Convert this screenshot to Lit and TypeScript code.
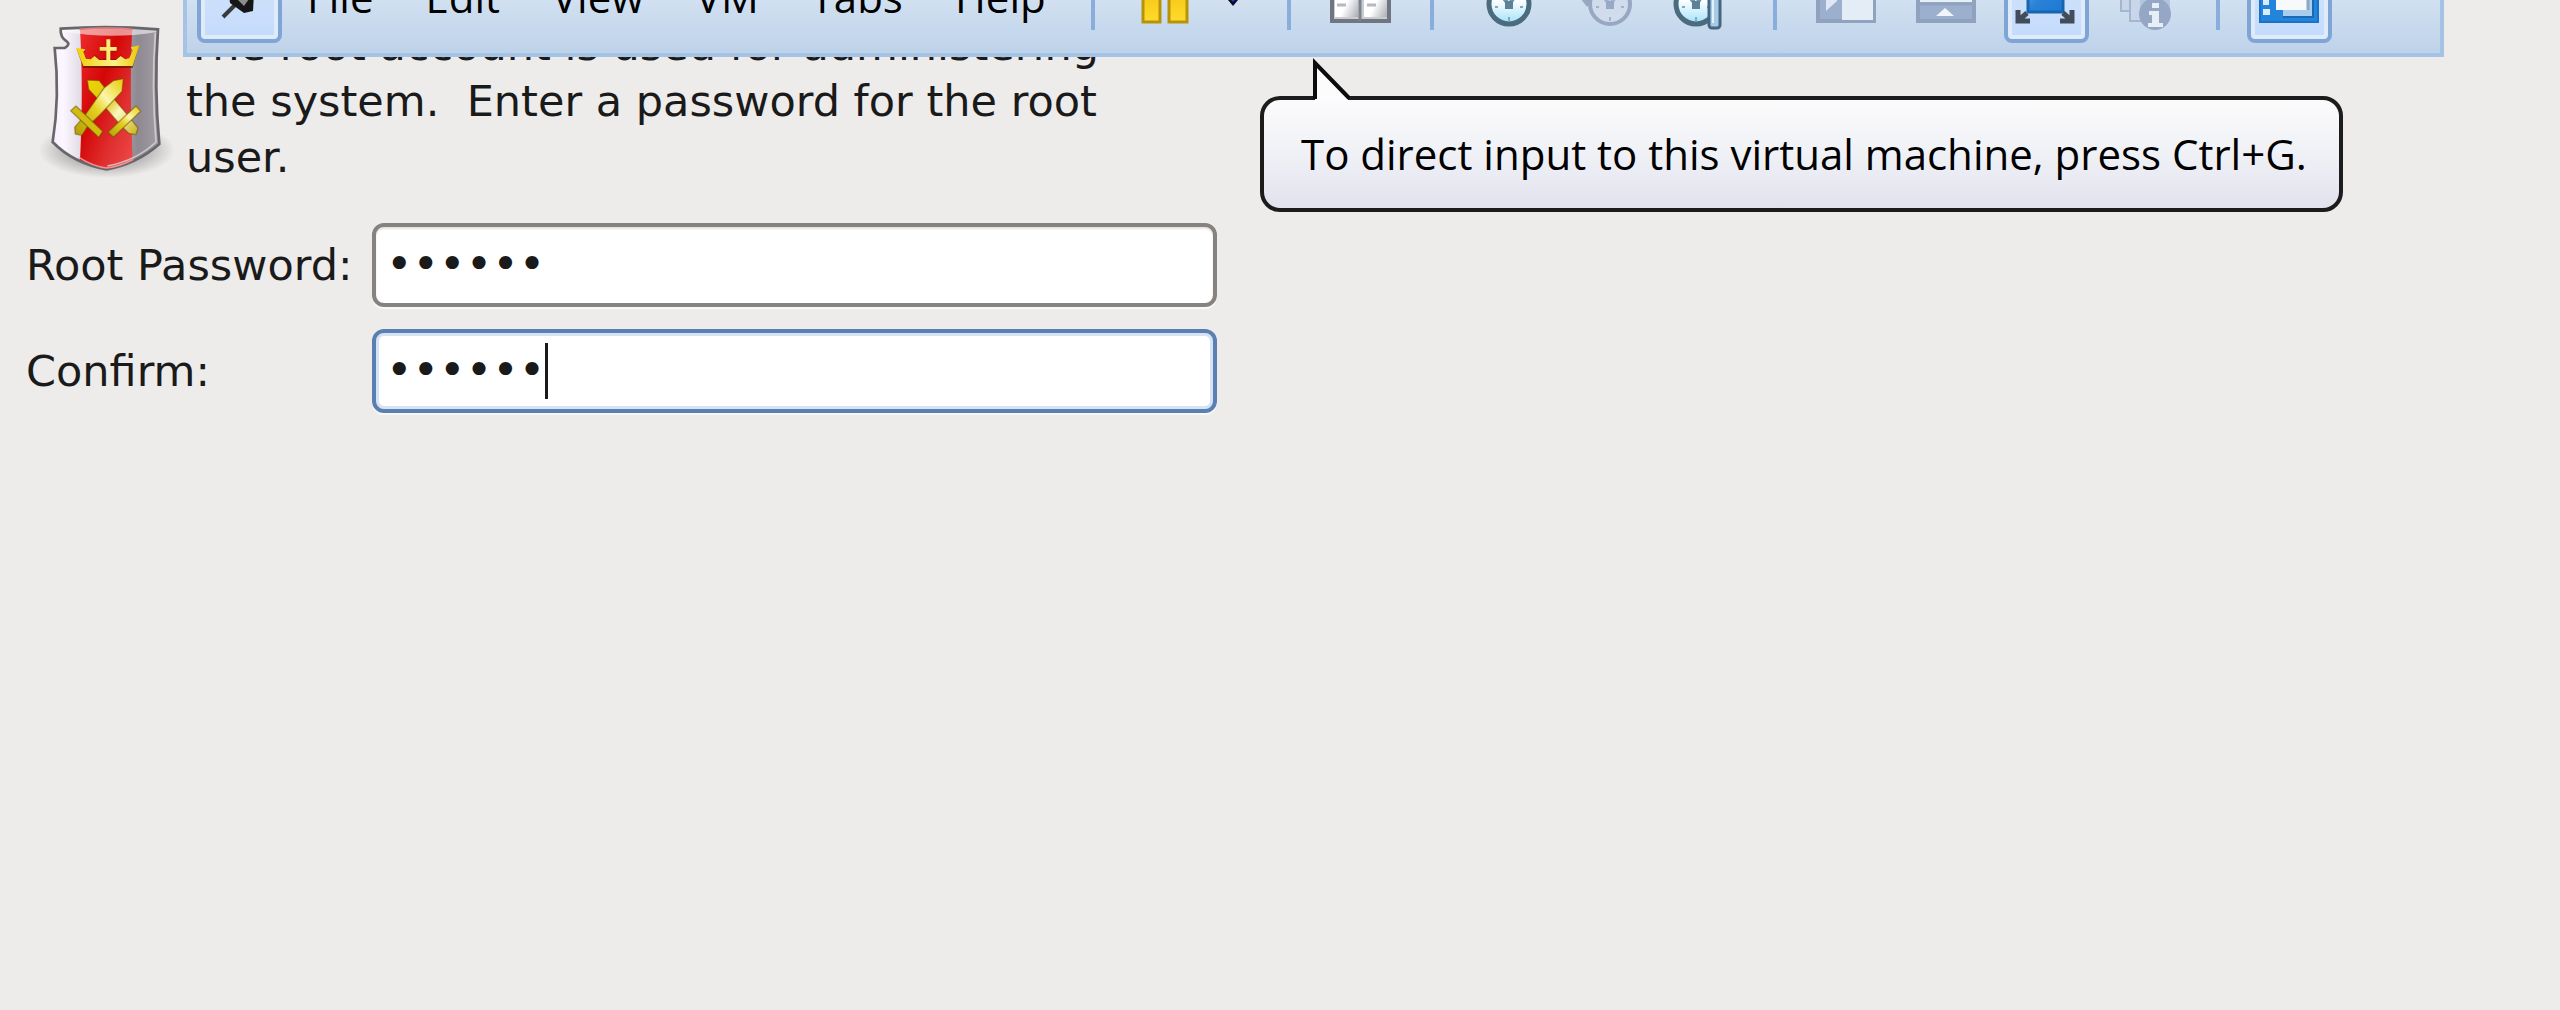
import { LitElement, html, svg, css, nothing } from "lit";
import { customElement, property } from "lit/decorators.js";

const art = {
  pin: svg`<path d="M13 62 L26 49" stroke="#3a3a3a" stroke-width="4"/><path d="M18 32 L36 26 L44 38 L43 56 L34 58 L20 48 Z" fill="#161616"/><path d="M25 42 L33 34 L39 44 L34 51 Z" fill="#8d8d8d"/>`,
  pause: svg`<g fill="url(#g)" stroke="#b8930a" stroke-width="3"><rect x="9" y="14" width="17" height="53"/><rect x="35" y="14" width="18" height="53"/></g><defs><linearGradient id="g" x2="0" y2="1"><stop offset="0" stop-color="#f0b400"/><stop offset="1" stop-color="#ffdc2c"/></linearGradient></defs>`,
  book: svg`<defs><linearGradient id="b" x2="1" y2="1"><stop offset=".6" stop-color="#fff"/><stop offset="1" stop-color="#a8acb4"/></linearGradient></defs><rect x="2" y="14" width="57" height="52" fill="#c9cdd2" stroke="#70767f" stroke-width="4"/><rect x="5" y="16" width="23" height="46" fill="url(#b)"/><rect x="34" y="16" width="23" height="46" fill="url(#b)"/><path d="M30 14V66" stroke="#7d838b" stroke-width="3"/><path d="M7 50h9M37 50h9" stroke="#b3b8c4" stroke-width="3"/>`,
};

@customElement("vm-icon")
export class VmIcon extends LitElement {
  static styles = css`
    :host { display: block; }
    svg { display: block; width: 60px; height: 76px; overflow: visible; }
  `;
  @property() name = "";

  private shape() {
    switch (this.name) {
      case "pin": return art.pin;
      case "pause": return art.pause;
      case "book": return art.book;
      case "snapshot":
      case "manager": {
        const cx = this.name === "snapshot" ? 36 : 23;
        return svg`<defs><linearGradient id="c" x2="0" y2="1"><stop offset=".4" stop-color="#fff"/><stop offset="1" stop-color="#9fe2fb"/></linearGradient></defs>
          <circle cx=${cx} cy="49" r="20" fill="url(#c)" stroke="#4b6b7e" stroke-width="5"/>
          <path d="M${cx - 9} 38 L${cx} 50 L${cx + 9} 36" fill="none" stroke="#6e93a8" stroke-width="4"/>
          <rect x=${cx - 4} y="46" width="8" height="8" fill="#5d8298"/>
          <path d="M${cx} 62v4M${cx - 14} 52h3M${cx + 11} 52h3" stroke="#7fa9bd" stroke-width="2"/>
          ${this.name === "manager" ? svg`<rect x="36" y="16" width="11" height="57" rx="3" fill="#a5cbe6" stroke="#45667d" stroke-width="3"/><path d="M40 18V68" stroke="#e2f1fb" stroke-width="2"/>` : nothing}`;
      }
      case "revert":
        return svg`<circle cx="37" cy="49" r="20" fill="#d0dcec" stroke="#98a8c3" stroke-width="4"/><path d="M28 38 L37 50 L46 36" fill="none" stroke="#a4b3cc" stroke-width="4"/><rect x="33" y="46" width="8" height="8" fill="#98a9c6"/><path d="M8 44H20L14 52Z" fill="#98a8c3"/><path d="M37 62v4M23 52h3M48 52h3" stroke="#a4b3cc" stroke-width="2"/>`;
      case "sidebar":
        return svg`<rect x="2" y="18" width="56" height="48" fill="#9cb0cd" stroke="#8fa3be" stroke-width="4"/><rect x="26" y="20" width="31" height="45" fill="#e4ecf6"/><path d="M10 34H21V46L10 56Z" fill="#dfe8f4"/>`;
      case "thumbs":
        return svg`<rect x="2" y="18" width="56" height="48" fill="#9cb0cd" stroke="#8fa3be" stroke-width="4"/><rect x="4" y="20" width="52" height="27" fill="#e8eff8"/><path d="M2 49H58" stroke="#8fa3be" stroke-width="3"/><path d="M20 61L29 53L38 61Z" fill="#f0f5fb"/>`;
      case "fullscreen":
        return svg`<defs><linearGradient id="f" x2="1" y2="1"><stop offset="0" stop-color="#62a8e6"/><stop offset=".5" stop-color="#2a82d6"/><stop offset="1" stop-color="#1b79d4"/></linearGradient></defs><rect x="12" y="24" width="35" height="33" fill="url(#f)" stroke="#1764b0" stroke-width="3"/><g fill="none" stroke="#424c5a" stroke-width="5"><path d="M2 55V66H14M3 65L11 58M56 55V66H44M55 65L47 58"/></g>`;
      case "unity":
        return svg`<g fill="#c9d6e9" stroke="#a6b6d0" stroke-width="2"><rect x="5" y="22" width="26" height="34"/><rect x="14" y="26" width="28" height="40"/></g><rect x="24" y="30" width="30" height="26" fill="#b4c4dc"/><circle cx="39" cy="59" r="16" fill="#94a8c6"/><path d="M36 48h7v5h-7zM33 56h10v12h4v4H32v-4h4v-8h-3z" fill="#e6eef8"/>`;
      case "library":
        return svg`<rect x="1" y="10" width="58" height="57" fill="#2384dc" stroke="#1c72c4" stroke-width="2"/><path d="M24 14H54V62H24Z" fill="#a9cdec"/><path d="M54 14V62H24" fill="none" stroke="#1b69b5" stroke-width="2"/><rect x="17" y="14" width="32" height="41" fill="#f6fafd"/><path d="M49 14V55" stroke="#8ba9c4" stroke-width="3"/><g fill="#d8ecfb"><rect x="4" y="32" width="6" height="6"/><rect x="4" y="44" width="6" height="6"/><rect x="4" y="54" width="7" height="6"/></g>`;
    }
    return nothing;
  }
  render() {
    return html`<svg viewBox="0 0 60 76" aria-hidden="true">${this.shape()}</svg>`;
  }
}

@customElement("vm-toolbar")
export class VmToolbar extends LitElement {
  static styles = css`
    :host {
      display: flex; align-items: center; gap: 15px; box-sizing: border-box;
      height: 128px; padding: 0 10px; overflow: hidden;
      border: 4px solid #a5c4e5;
      background: linear-gradient(#e4eef6 30%, #cfdff0 60%, #bed2ea);
      font: 42px/60px "Open Sans", "Noto Sans", sans-serif; color: #000;
    }
    button {
      font: inherit; color: inherit; background: none; border: 0; padding: 0; margin: 0;
      display: flex; align-items: center; justify-content: center; box-sizing: border-box; flex: none;
    }
    .tool { width: 85px; height: 100px; }
    .on {
      border: 4px solid #7fa5d6; border-radius: 8px;
      box-shadow: inset 0 0 0 4px #e0ebfa;
      background: linear-gradient(#d9e7f8, #c3dbfc);
    }
    .menus { display: flex; padding: 8px 0 0; }
    .menu { padding: 0 26px; }
    .menus .menu:first-child { padding-left: 10px; }
    .menus .menu:last-child { padding-right: 18px; }
    .sep { width: 4px; height: 74px; margin: 0 12px; flex: none; background: #8aaedb; }
    .split { display: flex; }
    .drop { width: 53px; height: 100px; }
    .drop svg { width: 20px; height: 26px; }
  `;
  private tool(name: string, label: string, on = false) {
    return html`<button class="tool ${on ? "on" : ""}" aria-label=${label} aria-pressed=${on}><vm-icon name=${name}></vm-icon></button>`;
  }
  render() {
    const sep = html`<span class="sep"></span>`;
    return html`
      ${this.tool("pin", "Pin toolbar", true)}
      <nav class="menus">${["File", "Edit", "View", "VM", "Tabs", "Help"].map((m) => html`<button class="menu">${m}</button>`)}</nav>
      ${sep}
      <div class="split">
        ${this.tool("pause", "Suspend")}
        <button class="drop" aria-label="Power options"><svg viewBox="0 0 20 26"><path d="M0 14H20L10 26Z" fill="#0a0a20"/><path d="M6 14H14V18L10 22L6 18Z" fill="#2038d8"/></svg></button>
      </div>
      ${sep}${this.tool("book", "Send keys")}
      ${sep}${this.tool("snapshot", "Take snapshot")}${this.tool("revert", "Revert")}${this.tool("manager", "Manage snapshots")}
      ${sep}${this.tool("sidebar", "Show library")}${this.tool("thumbs", "Show thumbnails")}${this.tool("fullscreen", "Full screen", true)}${this.tool("unity", "Unity")}
      ${sep}${this.tool("library", "Console view", true)}
    `;
  }
}

@customElement("root-shield")
export class RootShield extends LitElement {
  static styles = css`
    :host { display: block; }
    svg { display: block; width: 150px; height: 180px; }
  `;
  render() {
    return html`<svg viewBox="0 0 450 540" aria-hidden="true">
      <defs>
        <linearGradient id="steel"><stop offset="0" stop-color="#ece6f0"/><stop offset=".22" stop-color="#fbf6ff"/><stop offset=".72" stop-color="#8f8a92"/><stop offset="1" stop-color="#b4b0b8"/></linearGradient>
        <linearGradient id="red" x2="1" y2="1"><stop offset="0" stop-color="#f03030"/><stop offset=".4" stop-color="#d40606"/><stop offset=".7" stop-color="#e03030"/><stop offset="1" stop-color="#f04c4c"/></linearGradient>
        <linearGradient id="gold" x2="1"><stop offset="0" stop-color="#f0cf00"/><stop offset=".6" stop-color="#fbf08a"/><stop offset="1" stop-color="#ecc800"/></linearGradient>
        <linearGradient id="blade1" x1="0" y1="1" x2="1" y2="0"><stop offset="0" stop-color="#b09a08"/><stop offset=".45" stop-color="#e4d020"/><stop offset=".65" stop-color="#fbf6a8"/><stop offset="1" stop-color="#e8c800"/></linearGradient>
        <linearGradient id="blade2" x2="1" y2="1"><stop offset="0" stop-color="#f0d400"/><stop offset=".4" stop-color="#dcc414"/><stop offset=".6" stop-color="#fbf8c0"/><stop offset="1" stop-color="#c8b018"/></linearGradient>
        <radialGradient id="shade"><stop offset="0" stop-color="#000" stop-opacity=".5"/><stop offset=".7" stop-color="#000" stop-opacity=".16"/><stop offset="1" stop-color="#000" stop-opacity="0"/></radialGradient>
        <clipPath id="body"><path d="M92 56 Q240 46 384 58 Q372 230 388 402 Q320 462 230 478 Q130 460 68 396 Q90 260 74 114 L104 114 Q122 104 110 94 Q90 82 92 56Z"/></clipPath>
      </defs>
      <ellipse cx="230" cy="420" rx="205" ry="84" fill="url(#shade)"/>
      <g clip-path="url(#body)">
        <rect width="450" height="540" fill="url(#steel)"/>
        <path d="M149 40H308Q296 220 310 490H148Q162 240 149 40Z" fill="url(#red)"/>
        <path d="M100 52H380V66Q240 90 100 64Z" fill="#fff" opacity=".55"/>
      </g>
      <g fill="none">
        <path d="M92 56 Q240 46 384 58 Q372 230 388 402 Q320 462 230 478 Q130 460 68 396 Q90 260 74 114 L104 114 Q122 104 110 94 Q90 82 92 56Z" stroke="#68656b" stroke-width="8"/>
        <path d="M148 58Q240 50 308 58" stroke="#e08080" stroke-width="5"/>
        <path d="M376 68 Q364 230 378 396 Q318 452 232 468" stroke="#d8d6da" stroke-width="5" opacity=".8"/>
        <path d="M148 443Q190 470 230 474Q270 470 310 448" stroke="#f09090" stroke-width="5"/>
      </g>
      <path d="M140 118L166 122L160 130L172 148L186 146L196 136L208 148H229V124H209V112H229V90H241V112H260V124H241V148H260L272 136L286 148L300 144L308 124L302 114L326 108L308 174H160Z" fill="#4a1400" opacity=".6"/>
      <path d="M138 114L166 118L160 126L168 146L182 148L194 138L208 150H229V122H209V111H229V88H241V111H260V122H241V150H258L272 138L286 148L298 144L308 122L302 112L328 106L308 168H160Z" fill="url(#gold)"/>
      <g stroke="#6b4a00" stroke-opacity=".5" stroke-width="4" stroke-linejoin="round">
        <path d="M172 210L208 212L236 248L292 314L324 354L318 374L296 370L276 350L208 272L176 238Z" fill="url(#blade2)"/>
        <path d="M318 288L332 304L250 382L234 366Z" fill="url(#blade1)"/>
        <path d="M280 206L276 244L212 312L172 350L156 376L136 372L134 352L166 314L222 234L250 212Z" fill="url(#blade1)"/>
        <path d="M122 302L138 288L218 364L206 382Z" fill="#d2bc10"/>
      </g>
    </svg>`;
  }
}

@customElement("app-root")
export class AppRoot extends LitElement {
  static styles = css`
    :host {
      display: block; position: relative; min-height: 100vh; overflow: hidden;
      background: #edecea; color: #1a1a1a; font: 43px/56px "DejaVu Sans", sans-serif;
    }
    vm-toolbar { position: absolute; top: -71px; left: 183px; right: 116px; z-index: 1; }
    .intro { display: flex; gap: 6px; padding: 10px 0 0 30px; }
    .intro p { margin: 0; padding-top: 7px; white-space: pre; }
    .form {
      display: grid; grid-template-columns: 330px 33vw; gap: 22px 16px;
      align-items: center; padding: 33px 26px;
    }
    .field { position: relative; display: flex; }
    input {
      width: 100%; height: 84px; box-sizing: border-box; margin: 0; padding: 0 10px 4px;
      border: 4px solid #85827f; border-radius: 12px; background: #fff; outline: 0;
      box-shadow: 0 2px 0 #f8f8f6, inset 0 2px 2px #e4e4e2;
      font: 45px/56px "DejaVu Sans", sans-serif; color: #1a1a1a; caret-color: transparent;
    }
    .active input { border-color: #5a7fb0; box-shadow: 0 2px 0 #f8f8f6, inset 0 0 0 3px #d5e3f5; }
    .caret { position: absolute; left: 173px; top: 14px; width: 3px; height: 56px; background: #1a1a1a; }
    .tip { position: absolute; top: 96px; left: 1260px; }
    .bubble {
      padding: 24px 32px 24px 37px; border: 4px solid #1c1c1c; border-radius: 20px; color: #000;
      background: linear-gradient(#fbfbfc, #f0f1f6 50%, #e2e2ee);
      font: 42px/60px "Open Sans", "Noto Sans", sans-serif; white-space: nowrap;
    }
    .tail { position: absolute; left: 50px; top: -38px; width: 44px; height: 43px; }
  `;
  render() {
    return html`
      <vm-toolbar></vm-toolbar>
      <div class="intro">
        <root-shield></root-shield>
        <p>The root account is used for administering<br>the system.  Enter a password for the root<br>user.</p>
      </div>
      <form class="form">
        <label for="pw">Root Password:</label>
        <div class="field"><input id="pw" type="password" autocomplete="off" .value=${"secret"}></div>
        <label for="confirm">Confirm:</label>
        <div class="field active"><input id="confirm" type="password" autocomplete="off" .value=${"secret"}><span class="caret"></span></div>
      </form>
      <div class="tip" role="tooltip">
        <div class="bubble">To direct input to this virtual machine, press Ctrl+G.</div>
        <svg class="tail" viewBox="0 0 44 43" aria-hidden="true"><path d="M5 43V5L38 40V43Z" fill="#fcfcfd"/><path d="M5 41V5L39 40" fill="none" stroke="#0c0c0c" stroke-width="4"/></svg>
      </div>
    `;
  }
}
